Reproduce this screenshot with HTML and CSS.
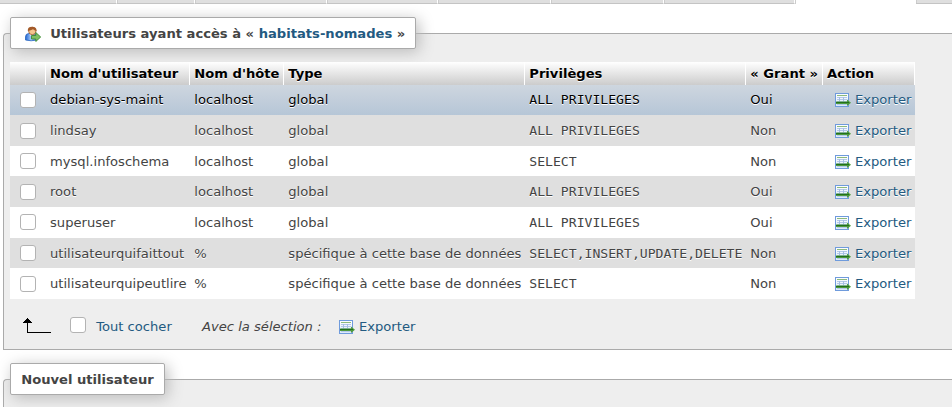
FILE: index.html
```html
<!DOCTYPE html>
<html lang="fr">
<head>
<meta charset="utf-8">
<title>Utilisateurs</title>
<link rel="stylesheet" href="styles.css">
</head>
<body>
<svg class="defs" width="0" height="0">
  <defs>
    <linearGradient id="sheet" x1="0" y1="0" x2="0" y2="1"><stop offset="0" stop-color="#fff"/><stop offset="1" stop-color="#d9e7fa"/></linearGradient>
    <linearGradient id="shirt" x1="0" y1="0" x2="1" y2="0"><stop offset="0" stop-color="#2467cf"/><stop offset=".5" stop-color="#a9ceff"/><stop offset="1" stop-color="#2f72d4"/></linearGradient>
  </defs>
  <symbol id="export" viewBox="0 0 16 16">
    <rect x=".5" y=".5" width="13" height="13" fill="url(#sheet)" stroke="#6f9bdc"/>
    <path d="M2 2.500h10" stroke="#8cba7c"/>
    <path d="M2 4.500h10M2 6.500h10M2 8.500h10M2 11.500h10" stroke="#b3c9e9"/>
    <path d="M4.500 4v5M8.500 4v5" stroke="#a6bfe4"/>
    <path d="M1 8.500h11V6.500l4 3.200-4 3.200v-2H1z" fill="#4e9a3c"/>
    <path d="M1 9.500h13" stroke="#23701c"/>
  </symbol>
  <symbol id="user" viewBox="0 0 16 16">
    <path d="M.5 14V11Q.5 7.500 4 7.500h5.500Q12 8 12 11v3Q6 15.500.5 14z" fill="url(#shirt)" stroke="#2563c0" stroke-width=".8"/>
    <path d="M4.500 8h4L6.500 11z" fill="#eef6ff"/>
    <ellipse cx="7.300" cy="5" rx="3.700" ry="3.700" fill="#f5c58f" stroke="#9a5628" stroke-width=".8"/>
    <path d="M2.800 5Q2.500.8 7 .8T11.700 5Q9 4.500 8 3.300 6 4.500 2.800 5z" fill="#a35a28"/>
    <path d="M6.500 9.500h4.300V6.500L15.700 11l-4.900 4.500V13H6.500z" fill="#7fbf62" stroke="#3d8a35" stroke-width=".9"/>
  </symbol>
</svg>
<nav class="tabs">
  <span class="tab t1"></span><span class="tab t2"></span><span class="tab t3"></span><span class="tab t4"></span><span class="tab t5"></span><span class="tab t6"></span><span class="tab t7"></span><span class="tab active"></span><span class="tab last"></span>
</nav>
<section class="panel users">
  <h2 class="legend"><svg class="icon"><use href="#user"/></svg><span>Utilisateurs ayant accès à « <a>habitats-nomades</a> »</span></h2>
  <table>
    <colgroup><col class="c1"><col class="c2"><col class="c3"><col class="c4"><col class="c5"><col class="c6"><col class="c7"></colgroup>
    <thead><tr><th></th><th>Nom d'utilisateur</th><th>Nom d'hôte</th><th>Type</th><th>Privilèges</th><th>« Grant »</th><th>Action</th></tr></thead>
    <tbody>
      <tr class="hover"><td><i class="check"></i></td><td>debian-sys-maint</td><td>localhost</td><td>global</td><td><code>ALL PRIVILEGES</code></td><td>Oui</td><td><a class="export"><svg class="icon"><use href="#export"/></svg>Exporter</a></td></tr>
      <tr><td><i class="check"></i></td><td>lindsay</td><td>localhost</td><td>global</td><td><code>ALL PRIVILEGES</code></td><td>Non</td><td><a class="export"><svg class="icon"><use href="#export"/></svg>Exporter</a></td></tr>
      <tr><td><i class="check"></i></td><td>mysql.infoschema</td><td>localhost</td><td>global</td><td><code>SELECT</code></td><td>Non</td><td><a class="export"><svg class="icon"><use href="#export"/></svg>Exporter</a></td></tr>
      <tr><td><i class="check"></i></td><td>root</td><td>localhost</td><td>global</td><td><code>ALL PRIVILEGES</code></td><td>Oui</td><td><a class="export"><svg class="icon"><use href="#export"/></svg>Exporter</a></td></tr>
      <tr><td><i class="check"></i></td><td>superuser</td><td>localhost</td><td>global</td><td><code>ALL PRIVILEGES</code></td><td>Oui</td><td><a class="export"><svg class="icon"><use href="#export"/></svg>Exporter</a></td></tr>
      <tr><td><i class="check"></i></td><td>utilisateurquifaittout</td><td>%</td><td>spécifique à cette base de données</td><td><code>SELECT,INSERT,UPDATE,DELETE</code></td><td>Non</td><td><a class="export"><svg class="icon"><use href="#export"/></svg>Exporter</a></td></tr>
      <tr><td><i class="check"></i></td><td>utilisateurquipeutlire</td><td>%</td><td>spécifique à cette base de données</td><td><code>SELECT</code></td><td>Non</td><td><a class="export"><svg class="icon"><use href="#export"/></svg>Exporter</a></td></tr>
    </tbody>
  </table>
  <div class="bulk">
    <svg class="arrow" width="28" height="16" viewBox="0 0 28 16" shape-rendering="crispEdges"><path d="M4.500 2v12.500H28" fill="none" stroke="#000"/><path d="M4 0h1v1h1v1h1v1h1v1h1v1H0V4h1V3h1V2h1V1h1z"/></svg>
    <i class="check"></i>
    <a class="all">Tout cocher</a>
    <em>Avec la sélection :</em>
    <a class="export"><svg class="icon"><use href="#export"/></svg>Exporter</a>
  </div>
</section>
<section class="panel new">
  <h2 class="legend">Nouvel utilisateur</h2>
</section>
</body>
</html>
```
FILE: styles.css
```css
* { box-sizing: border-box; }
html { height: 100%; overflow: hidden; }
body {
  margin: 0;
  height: 407px;
  overflow: hidden;
  background: #fff;
  color: #444;
  font: 13.12px/16px "DejaVu Sans", sans-serif;
}
.defs { position: absolute; }
a { color: #235a81; }
.icon { width: 16px; height: 16px; flex: none; }

.tabs { display: flex; height: 4px; }
.tab {
  flex: none;
  background: #dfdfdf;
  border-right: 1px solid #fff;
  border-bottom: 1px solid #c4c4c4;
  box-shadow: inset 1px 0 #ccc;
}
.t1 { width: 117px; box-shadow: none; }
.t2 { width: 78px; }
.t3 { width: 132px; }
.t4 { width: 111px; }
.t5 { width: 113px; }
.t6 { width: 113px; }
.t7 { width: 131px; }
.active { width: 121px; background: #fff; border: 0; }
.last { width: 36px; border-right: 0; }

.panel {
  margin-left: 3px;
  padding-left: 6px;
  border: 1px solid #aaa;
  border-right: 0;
  border-radius: 4px 0 0 0;
  background: #eee;
}
.users { height: 317px; margin-top: 29px; }
.new { height: 28px; margin-top: 29px; border-bottom: 0; }
.legend {
  display: flex;
  align-items: center;
  width: 406px;
  height: 32px;
  margin: -17px 0 13px;
  padding: 1px 10px 0;
  border: 1px solid #aaa;
  border-radius: 2px;
  background: #fff;
  box-shadow: 3px 3px 15px #bbb;
  font-size: 13.12px;
  line-height: 16px;
  white-space: pre;
}
.legend .icon { margin: 0 9.200px 0 4px; }
.new .legend { width: 155px; margin-bottom: 0; padding-left: 10.200px; }

table {
  width: 905px;
  table-layout: fixed;
  border-collapse: separate;
  border-spacing: 0;
  position: relative;
}
.c1 { width: 36px; }
.c2 { width: 144px; }
.c3 { width: 94px; }
.c4 { width: 241px; }
.c5 { width: 221px; }
.c6 { width: 77px; }
.c7 { width: 92px; }
th, td {
  padding: 0 0 0 4.300px;
  text-align: left;
  white-space: nowrap;
  vertical-align: middle;
  text-shadow: 0 1px 0 #fff;
}
th:nth-child(2), td:nth-child(2) { padding-left: 4px; }
th:last-child { padding-left: 4px; }
th {
  height: 22.600px;
  padding-top: 1px;
  color: #000;
  border-right: 1px solid #fff;
  background: linear-gradient(#fff, #ccc);
}
td { height: 30.625px; padding-top: 1.080px; }
td:first-child { padding: 0 0 0 10px; }
tbody tr:nth-child(even) td { background: #dfdfdf; }
tbody tr:nth-child(odd) td { background: #fff; }
tbody tr.hover td { background: linear-gradient(#ced6df, #b6c6d7); color: #000; }
code { display: block; font: 13.12px/16px "DejaVu Sans Mono", monospace; }
.check {
  display: block;
  flex: none;
  width: 16px;
  height: 16px;
  border: 1px solid #b3b3b3;
  border-radius: 3px;
  background: #fff;
}
.export { display: flex; align-items: center; gap: 4px; }
.export .icon { position: relative; top: 1px; }
td .export { padding-left: 7.700px; }

.bulk { display: flex; align-items: center; height: 18px; margin-top: 19.400px; padding-left: 13px; }
.arrow { flex: none; margin: -2px 19px 0 0; }
.bulk .check { margin-top: -4px; }
.all { width: 97px; margin: 0 8.800px 0 10.200px; }
.bulk em { width: 121px; margin-right: 16px; }
```
